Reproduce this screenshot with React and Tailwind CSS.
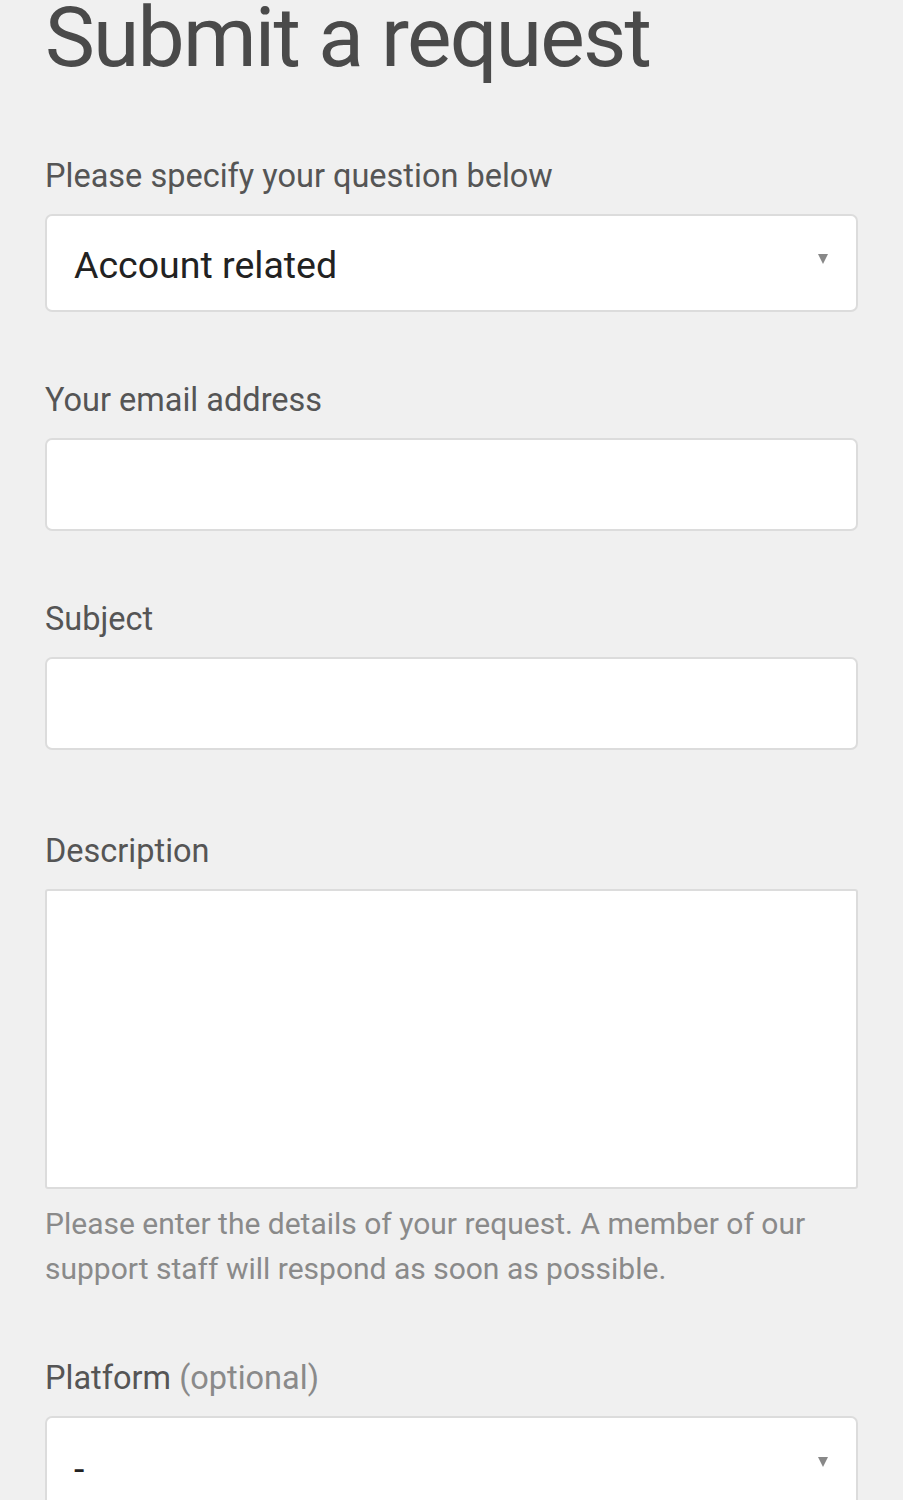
import React from "react";

function Caret() {
  return (
    <svg width="12" height="12" viewBox="0 0 12 12" className="shrink-0">
      <path d="M1 1 L11 1 L6 11 Z" fill="#888" />
    </svg>
  );
}

function Label({ children, className = "" }) {
  return (
    <div className={`text-[32.5px] leading-[36px] text-[#555] ${className}`}>{children}</div>
  );
}

export default function App() {
  return (
    <div
      className="min-h-[1500px] bg-[#f0f0f0] px-[45px] overflow-hidden"
      style={{ fontFamily: "Roboto, 'Noto Sans', sans-serif" }}
    >
      <h1 className="text-[84px] leading-[84px] text-[#4a4a4a] mt-[-4px] tracking-[-1.8px]">
        Submit a request
      </h1>

      <Label className="mt-[78px]">Please specify your question below</Label>
      <div className="mt-[20px] h-[98px] bg-white border-2 border-[#dcdcdc] rounded-[7px] flex items-center justify-between pl-[27px] pr-[27px]">
        <span className="text-[37.5px] text-[#222] mt-[4px]">Account related</span>
        <span className="mt-[-8px]"><Caret /></span>
      </div>

      <Label className="mt-[70px]">Your email address</Label>
      <div className="mt-[20px] h-[93px] bg-white border-2 border-[#dcdcdc] rounded-[7px]" />

      <Label className="mt-[70px]">Subject</Label>
      <div className="mt-[20px] h-[93px] bg-white border-2 border-[#dcdcdc] rounded-[7px]" />

      <Label className="mt-[83px]">Description</Label>
      <div className="mt-[20px] h-[300px] bg-white border-2 border-[#dcdcdc] rounded-[3px]" />

      <div className="mt-[12px] text-[30px] leading-[45px] text-[#8a8a8a]">
        Please enter the details of your request. A member of our support staff will respond as soon as possible.
      </div>

      <Label className="mt-[69px]">
        Platform <span className="text-[#8a8a8a]">(optional)</span>
      </Label>
      <div className="mt-[20px] h-[120px] bg-white border-2 border-[#dcdcdc] rounded-[7px] flex items-start justify-between pl-[27px] pr-[27px] pt-[23px]">
        <span className="text-[37.5px] text-[#222]">-</span>
        <span className="mt-[15px]"><Caret /></span>
      </div>
    </div>
  );
}
